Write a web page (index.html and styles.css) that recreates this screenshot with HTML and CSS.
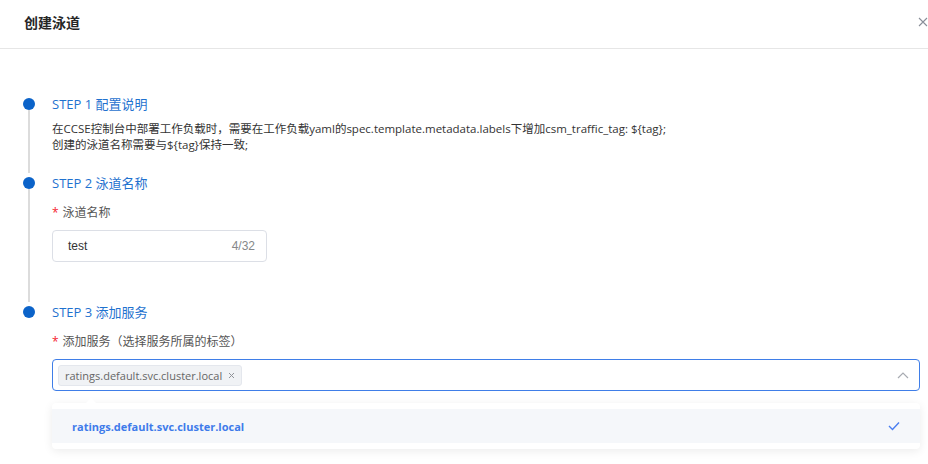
FILE: index.html
```html
<!DOCTYPE html>
<html lang="zh">
<head>
<meta charset="utf-8">
<link rel="stylesheet" href="styles.css">
</head>
<body>
<div class="dialog">
  <div class="header">
    <div class="title">创建泳道</div>
    <svg class="close" width="10" height="10" viewBox="0 0 10 10"><path d="M1 1L9 9M9 1L1 9" stroke="#8a8f99" stroke-width="1.1" fill="none"/></svg>
  </div>
  <div class="body">
    <div class="step">
      <div class="rail"><span class="dot"></span><span class="line"></span></div>
      <div class="content">
        <div class="step-title">STEP 1 配置说明</div>
        <div class="desc">在CCSE控制台中部署工作负载时，需要在工作负载yaml的spec.template.metadata.labels下增加csm_traffic_tag: ${tag};<br>创建的泳道名称需要与${tag}保持一致;</div>
      </div>
    </div>
    <div class="step">
      <div class="rail"><span class="dot"></span><span class="line"></span></div>
      <div class="content">
        <div class="step-title">STEP 2 泳道名称</div>
        <div class="label"><span class="req">*</span>泳道名称</div>
        <div class="input">
          <span class="value">test</span>
          <span class="count">4/32</span>
        </div>
      </div>
    </div>
    <div class="step last">
      <div class="rail"><span class="dot"></span></div>
      <div class="content">
        <div class="step-title">STEP 3 添加服务</div>
        <div class="label"><span class="req">*</span>添加服务（选择服务所属的标签）</div>
        <div class="select">
          <span class="tag">ratings.default.svc.cluster.local<svg class="tag-x" width="7" height="7" viewBox="0 0 7 7"><path d="M1 1L6 6M6 1L1 6" stroke="#909399" stroke-width="1" fill="none"/></svg></span>
          <svg class="arrow" width="12" height="8" viewBox="0 0 12 8"><path d="M1 7L6 2L11 7" stroke="#a8abb2" stroke-width="1.2" fill="none"/></svg>
        </div>
        <div class="dropdown">
          <span class="caret"></span>
          <div class="option">
            <span>ratings.default.svc.cluster.local</span>
            <svg width="12" height="10" viewBox="0 0 12 10"><path d="M1 5L4.5 8.5L11 1.5" stroke="#4a7ef0" stroke-width="1.4" fill="none"/></svg>
          </div>
        </div>
      </div>
    </div>
  </div>
</div>
</body>
</html>
```

FILE: styles.css
```css
* { box-sizing: border-box; }
html, body { margin: 0; padding: 0; background: #fff; }
body {
  font-family: "Open Sans", "Noto Sans CJK SC", sans-serif;
  font-size: 12px;
  color: #333;
  width: 928px;
  height: 464px;
  overflow: hidden;
}
.header {
  height: 49px;
  border-bottom: 1px solid #e6e6e6;
  display: flex;
  align-items: center;
  justify-content: space-between;
  padding: 0 0 4px 24px;
}
.title {
  font-size: 14px;
  font-weight: 600;
  color: #262626;
  font-family: "Noto Sans CJK SC", sans-serif;
}
.close { margin-right: 0; }
.body {
  padding: 45px 8px 0 23px;
}
.step {
  display: flex;
}
.rail {
  flex: none;
  display: flex;
  flex-direction: column;
  align-items: center;
  width: 12px;
  margin-right: 17px;
  padding-top: 4px;
}
.dot {
  width: 12px;
  height: 12px;
  border-radius: 50%;
  background: #0b63c9;
  flex: none;
}
.line {
  flex: 1;
  width: 2px;
  background: #dcdcdc;
}
.content { flex: 1; min-width: 0; }
.step-title {
  color: #1f72cf;
  font-size: 13px;
  line-height: 20px;
  height: 20px;
}
.desc {
  margin-top: 7px;
  line-height: 16px;
  color: #333;
  font-size: 11.5px;
  padding-bottom: 20px;
}
.label {
  margin-top: 10px;
  line-height: 20px;
  color: #555;
  font-size: 12px;
}
.req { color: #f5222d; margin-right: 4px; }
.input {
  margin-top: 7px;
  width: 215px;
  height: 32px;
  border: 1px solid #dcdfe6;
  border-radius: 4px;
  display: flex;
  align-items: center;
  justify-content: space-between;
  padding: 0 11px 0 15px;
  margin-bottom: 40px;
}
.value { color: #333; font-size: 12px; font-family: "Liberation Sans", sans-serif; }
.count { color: #86888a; font-size: 12px; font-family: "Liberation Sans", sans-serif; }
.select {
  margin-top: 7px;
  height: 32px;
  border: 1px solid #3f7ee8;
  border-radius: 4px;
  display: flex;
  align-items: center;
  justify-content: space-between;
  padding: 0 10px 0 5px;
}
.tag {
  height: 21px;
  background: #f0f2f5;
  border: 1px solid #e4e7ed;
  border-radius: 3px;
  color: #666;
  font-size: 11px;
  display: flex;
  align-items: center;
  gap: 6px;
  padding: 0 6px 0 6px;
}
.dropdown {
  position: relative;
  margin-top: 12px;
  background: #fff;
  border-radius: 4px;
  box-shadow: 0 2px 10px rgba(0,0,0,0.08);
  padding: 6px 0;
}
.caret {
  position: absolute;
  top: -5px;
  left: 34px;
  width: 0; height: 0;
  border-left: 5px solid transparent;
  border-right: 5px solid transparent;
  border-bottom: 5px solid #fff;
}
.option {
  height: 34px;
  background: #f5f7fa;
  display: flex;
  align-items: center;
  justify-content: space-between;
  padding: 0 20px 0 20px;
  color: #3e7bea;
  font-weight: 700;
  font-size: 11px;
}
```
